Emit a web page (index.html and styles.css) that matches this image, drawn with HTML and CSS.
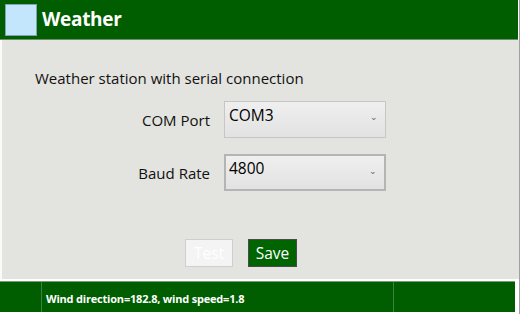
FILE: index.html
```html
<!DOCTYPE html>
<html>
<head>
<meta charset="utf-8">
<link rel="stylesheet" href="styles.css">
</head>
<body>
<div class="window">
  <div class="titlebar">
    <div class="app-icon"></div>
    <div class="title">Weather</div>
  </div>
  <div class="content">
    <div class="intro">Weather station with serial connection</div>
    <div class="form">
      <div class="row">
        <div class="label">COM Port</div>
        <div class="combo"><span class="value">COM3</span><span class="chev">&#x2304;</span></div>
      </div>
      <div class="row">
        <div class="label">Baud Rate</div>
        <div class="combo focused"><span class="value">4800</span><span class="chev">&#x2304;</span></div>
      </div>
    </div>
    <div class="buttons">
      <button class="btn disabled">Test</button>
      <button class="btn primary">Save</button>
    </div>
  </div>
  <div class="status">
    <div class="cell first"></div>
    <div class="cell msg">Wind direction=182.8, wind speed=1.8</div>
    <div class="cell last"></div>
  </div>
</div>
</body>
</html>
```
FILE: styles.css
```css
html, body {
  margin: 0;
  padding: 0;
  background: #ffffff;
  font-family: "Open Sans", "Noto Sans", sans-serif;
}
.window {
  width: 520px;
  height: 314px;
  display: flex;
  flex-direction: column;
  box-sizing: border-box;
  border-right: 1px solid #a0a0a0;
}
.titlebar {
  height: 40px;
  background: #005e00;
  display: flex;
  align-items: center;
  padding-left: 5px;
  gap: 5px;
  box-sizing: border-box;
  border-bottom: 1px solid #6b8f6b;
  margin-right: 1px;
}
.app-icon {
  width: 30px;
  height: 30px;
  background: #c4e6fd;
  border: 1px solid #7fa4b8;
}
.title {
  color: #ffffff;
  font-weight: bold;
  font-size: 19px;
  letter-spacing: -0.3px;
  padding-bottom: 2px;
}
.content {
  height: 239px;
  background: #e3e3df;
  border-left: 2px solid #fafafa;
  box-sizing: border-box;
  padding: 27px 0 0 33px;
  display: flex;
  flex-direction: column;
}
.intro {
  font-size: 15px;
  color: #111;
  height: 22px;
  line-height: 22px;
}
.form {
  margin-top: 12px;
  display: flex;
  flex-direction: column;
  gap: 16px;
}
.row {
  display: flex;
  align-items: center;
}
.label {
  width: 189px;
  text-align: right;
  font-size: 15px;
  color: #111;
  padding-right: 14px;
  box-sizing: border-box;
}
.combo {
  width: 162px;
  height: 37px;
  box-sizing: border-box;
  border: 1px solid #c6c6c6;
  background: linear-gradient(#efefef, #e2e2e2);
  position: relative;
  padding: 2px 0 0 4px;
  font-size: 15.5px;
  color: #000;
}
.combo.focused {
  border: 2px solid #b4b4b4;
  padding: 1px 0 0 3px;
}
.chev {
  position: absolute;
  right: 7px;
  top: 8px;
  font-size: 9px;
  color: #666;
}
.buttons {
  margin-top: 48px;
  display: flex;
  gap: 15px;
  padding-left: 150px;
}
.btn {
  height: 28px;
  box-sizing: border-box;
  font-family: inherit;
  font-size: 15.5px;
  padding: 0;
  display: flex;
  align-items: center;
  justify-content: center;
}
.btn.disabled {
  width: 48px;
  background: #f4f4f4;
  border: 1px solid #cfcfcf;
  color: #ffffff;
}
.btn.primary {
  width: 49px;
  background: #006400;
  border: 1px solid #4a4a4a;
  color: #ffffff;
}
.status {
  margin-top: 2px;
  height: 31px;
  width: 515px;
  background: #005e00;
  display: flex;
  border-top: 1px solid #7a9a7a;
  box-sizing: border-box;
}
.cell {
  height: 100%;
  display: flex;
  align-items: center;
}
.cell.first {
  width: 41px;
  border-right: 1px solid #3f7f3f;
}
.cell.msg {
  width: 352px;
  border-right: 1px solid #3f7f3f;
  padding-left: 4px;
  box-sizing: border-box;
  color: #fff;
  font-weight: bold;
  font-size: 11px;
  letter-spacing: -0.2px;
  padding-top: 2px;
}
.cell.last {
  flex: 1;
}
```
